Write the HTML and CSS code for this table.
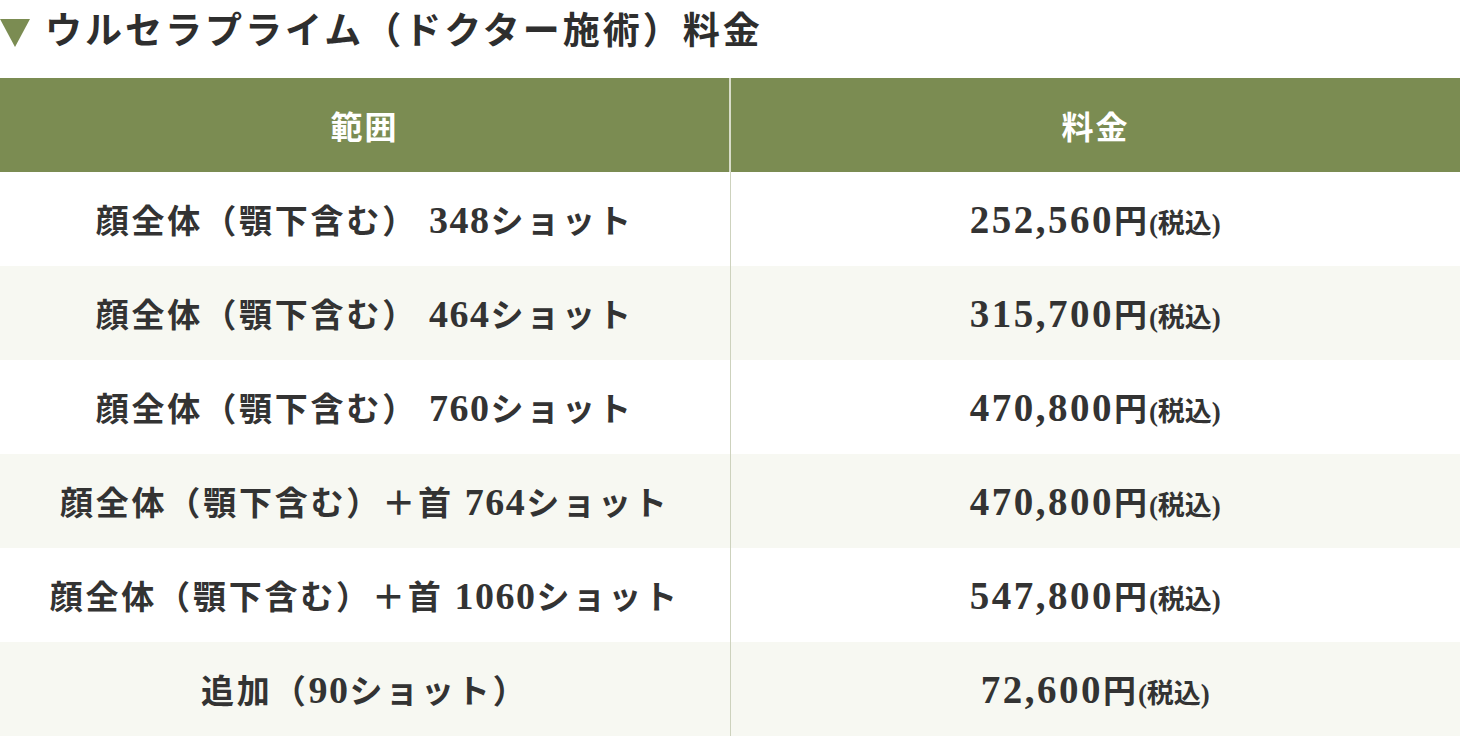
FILE: index.html
```html
<!DOCTYPE html>
<html lang="ja">
<head>
<meta charset="utf-8">
<link rel="stylesheet" href="styles.css">
</head>
<body>
<h2 class="title"><svg class="tri" width="30" height="28" viewBox="0 0 30 28"><polygon points="0,0 30,0 15,28" fill="#7b8c52"/></svg><span class="title-text">ウルセラプライム（ドクター施術）料金</span></h2>
<table class="price">
  <thead>
    <tr><th>範囲</th><th>料金</th></tr>
  </thead>
  <tbody>
    <tr><td>顔全体（顎下含む） <span class="n">348</span>ショット</td><td><span class="num">252,560</span>円<small>(税込)</small></td></tr>
    <tr><td>顔全体（顎下含む） <span class="n">464</span>ショット</td><td><span class="num">315,700</span>円<small>(税込)</small></td></tr>
    <tr><td>顔全体（顎下含む） <span class="n">760</span>ショット</td><td><span class="num">470,800</span>円<small>(税込)</small></td></tr>
    <tr><td>顔全体（顎下含む）＋首 <span class="n">764</span>ショット</td><td><span class="num">470,800</span>円<small>(税込)</small></td></tr>
    <tr><td>顔全体（顎下含む）＋首 <span class="n">1060</span>ショット</td><td><span class="num">547,800</span>円<small>(税込)</small></td></tr>
    <tr><td>追加（<span class="n">90</span>ショット）</td><td><span class="num">72,600</span>円<small>(税込)</small></td></tr>
  </tbody>
</table>
</body>
</html>
```
FILE: styles.css
```css
html, body {
  margin: 0;
  padding: 0;
  background: #ffffff;
}
body {
  font-family: "Liberation Serif", "Noto Sans CJK JP", serif;
  color: #333333;
  width: 1460px;
  overflow: hidden;
}
.title {
  margin: 0;
  height: 78px;
  display: flex;
  align-items: center;
  padding-bottom: 14px;
  box-sizing: border-box;
  font-size: 37px;
  font-weight: 700;
  line-height: 48px;
  letter-spacing: 3px;
  color: #2e2e2e;
}
.tri {
  flex: none;
  margin-right: 15px;
  margin-top: 2px;
}
.price {
  width: 1460px;
  border-collapse: collapse;
  table-layout: fixed;
}
.price th, .price td {
  height: 94px;
  padding: 0;
  text-align: center;
  vertical-align: middle;
  font-weight: 700;
  font-size: 33px;
  letter-spacing: 2.8px;
  box-sizing: border-box;
  white-space: nowrap;
}
.price th {
  background: #7b8c52;
  color: #ffffff;
  font-size: 32px;
  letter-spacing: 2px;
}
.price th + th {
  border-left: 2px solid #d8dcc9;
}
.price td + td {
  border-left: 1px solid #cdd2bd;
  letter-spacing: 2px;
}
.price tbody tr:nth-child(even) td {
  background: #f7f8f2;
}
.n {
  font-size: 38px;
  letter-spacing: 1.5px;
}
.num {
  font-size: 39px;
  letter-spacing: 2.5px;
}
.price small {
  font-size: 27px;
  letter-spacing: 0;
}
```
